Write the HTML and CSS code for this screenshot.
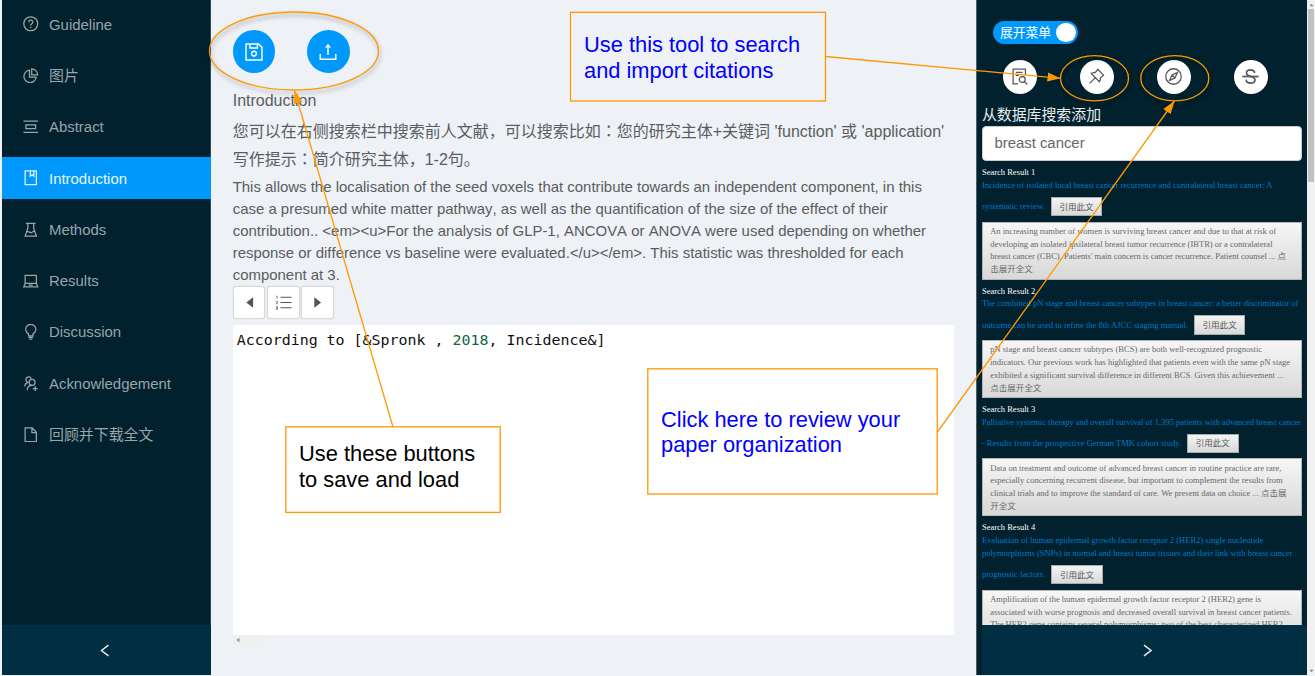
FILE: index.html
```html
<!DOCTYPE html>
<html lang="zh-CN">
<head>
<meta charset="utf-8">
<title>Introduction</title>
<link rel="stylesheet" href="styles.css">
</head>
<body>
<div class="app">
  <aside class="sider">
    <nav class="menu">
      <a class="item"><svg class="ico" viewBox="0 0 16 16"><circle cx="8" cy="8" r="7.2"/><path d="M5.9 6.4a2.1 2 0 1 1 3.1 1.7c-.7.4-1 .8-1 1.6M8 11v1.3"/></svg>Guideline</a>
      <a class="item han"><svg class="ico" viewBox="0 0 16 16"><path d="M6.7 2.3a6.4 6.4 0 1 0 7 7H6.7z"/><path d="M9 .9V7h6.1A6.3 6.3 0 0 0 9 .9z"/></svg><span>图片</span></a>
      <a class="item"><svg class="ico" viewBox="0 0 16 16"><path d="M.5 2.2h15M.5 13.8h15M3 6h10v4H3z"/></svg>Abstract</a>
      <a class="item active"><svg class="ico" viewBox="0 0 16 16"><path d="M2.2 1h11.6v14H2.2zM7.6 1v5.4l1.8-1.4 1.8 1.4V1"/></svg>Introduction</a>
      <a class="item"><svg class="ico" viewBox="0 0 16 16"><path d="M3 1.4h10M5 1.400v5L2.200 14.500h11.600L11 6.400v-5M3.600 10.300c2.200-1.200 3.300.9 5 .6 1.600-.3 1.800-1.600 3.400-1.500"/></svg>Methods</a>
      <a class="item"><svg class="ico" viewBox="0 0 16 16"><path d="M2.200 2.400h11.600v8.400H2.200zM2.200 10.800L.8 14.200h14.400l-1.400-3.400M6 12.600h4"/></svg>Results</a>
      <a class="item"><svg class="ico" viewBox="0 0 16 16"><path d="M5.700 12.200v-2a5.200 5.200 0 1 1 4.600 0v2zM5.600 13.800h4.800M6.400 15.500h3.200"/></svg>Discussion</a>
      <a class="item"><svg class="ico" viewBox="0 0 16 16"><circle cx="9.400" cy="6.600" r="3"/><path d="M8.600 2.900A2.900 2.900 0 1 0 5 6.600C3 7.400 1.900 8.800 1.600 10.800M4.200 14.600c.2-2.800 2.200-5 5.200-5M12.600 10.600v5M10.100 13.100h5"/></svg>Acknowledgement</a>
      <a class="item han"><svg class="ico" viewBox="0 0 16 16"><path d="M2.200 1h7.300l4.300 4.400V15H2.200zM9.200 1v4.700h4.600"/></svg><span>回顾并下载全文</span></a>
    </nav>
    <div class="trigger"><svg class="chev" viewBox="0 0 10 14"><path d="M9 1.200L1.500 7 9 12.800"/></svg></div>
  </aside>

  <main class="main">
    <div class="actions">
      <button class="round"><svg viewBox="0 0 18 18"><path d="M1 1h12.600L17 4.400V17H1zM5 1v4h7.400V1"/><circle cx="9" cy="10.600" r="2.400"/></svg></button>
      <button class="round"><svg viewBox="0 0 18 18"><path d="M1.200 11v5.200h15.600V11M9 12V3.500"/><path class="solid" d="M9 .8L12 4.600H6z"/></svg></button>
    </div>
    <div class="hints">
      <p>Introduction</p>
      <p>您可以在右侧搜索栏中搜索前人文献，可以搜索比如<span class="colon" lang="zh-TW">：</span>您的研究主体+关键词 'function' 或 'application'</p>
      <p>写作提示<span class="colon" lang="zh-TW">：</span>简介研究主体，1-2句。</p>
    </div>
    <p class="sample">This allows the localisation of the seed voxels that contribute towards an independent component, in this<br>case a presumed white matter pathway, as well as the quantification of the size of the effect of their<br>contribution.. &lt;em&gt;&lt;u&gt;For the analysis of GLP-1, ANCOVA or ANOVA were used depending on whether<br>response or difference vs baseline were evaluated.&lt;/u&gt;&lt;/em&gt;. This statistic was thresholded for each<br>component at 3.</p>
    <div class="pager">
      <button><svg viewBox="0 0 16 16"><path class="solid" d="M11.400 3v10L5 8z"/></svg></button>
      <button><svg viewBox="0 0 16 16"><path d="M5.200 3h10.300M5.200 8h10.300M5.200 13h10.300"/><path class="thin" d="M1 2h1v2.400M.8 7h1.600v1L1 9.200h1.600M.8 12h1.600v2.400H.8M1 13.200h1.400"/></svg></button>
      <button><svg viewBox="0 0 16 16"><path class="solid" d="M5 3v10l6.400-5z"/></svg></button>
    </div>
    <div class="editor">According to [&amp;Spronk , <span class="num">2018</span>, Incidence&amp;]</div>
    <div class="hscroll"><svg viewBox="0 0 4 6"><path class="solid" d="M3.500 .5v5L.5 3z"/></svg></div>
  </main>

  <aside class="panel">
    <div class="panel-body">
      <div class="switch"><span>展开菜单</span><i></i></div>
      <div class="tools">
        <button><svg viewBox="0 0 16 16"><path d="M6.600 15H2V1h11.600v5.800M4.600 4.200h6.400M4.600 7h3"/><circle cx="10.600" cy="10.800" r="2.800"/><path d="M12.600 12.800l2.800 2.800"/></svg></button>
        <button><svg viewBox="0 0 16 16"><path d="M9.300 1.400l5.300 5.300-3 2.700c.3 1.500 0 2.600-.8 3.600L3 5.200c1-.8 2.200-1.100 3.600-.8zM6.700 9.300L1.500 14.500"/></svg></button>
        <button><svg viewBox="0 0 16 16"><circle cx="8" cy="8" r="7.300"/><path d="M11.700 4.300L9.400 9.400l-5.100 2.300 2.300-5.100zM6.600 6.600l2.800 2.800"/></svg></button>
        <button><svg viewBox="0 0 16 16"><path class="bold" d="M12 4.600C11.600 2.500 10.200 1.700 8 1.700S4.200 2.900 4.200 4.700c0 4.100 8 2.200 8 6.400 0 2-1.700 3.200-4.200 3.200s-4-1.100-4.200-3.300"/><path class="bold" d="M.3 8h15.400"/></svg></button>
      </div>
      <div class="caption">从数据库搜索添加</div>
      <div class="search">breast cancer</div>

      <section class="result">
        <h4>Search Result 1</h4>
        <div class="link">Incidence of isolated local breast cancer recurrence and contralateral breast cancer: A</div>
        <div class="link row">systematic review.<button>引用此文</button></div>
        <div class="card">An increasing number of women is surviving breast cancer and due to that at risk of<br>developing an isolated ipsilateral breast tumor recurrence (IBTR) or a contralateral<br>breast cancer (CBC). Patients' main concern is cancer recurrence. Patient counsel ... 点<br>击展开全文</div>
      </section>
      <section class="result">
        <h4>Search Result 2</h4>
        <div class="link">The combined pN stage and breast cancer subtypes in breast cancer: a better discriminator of</div>
        <div class="link row">outcome can be used to refine the 8th AJCC staging manual.<button>引用此文</button></div>
        <div class="card">pN stage and breast cancer subtypes (BCS) are both well-recognized prognostic<br>indicators. Our previous work has highlighted that patients even with the same pN stage<br>exhibited a significant survival difference in different BCS. Given this achievement ...<br>点击展开全文</div>
      </section>
      <section class="result">
        <h4>Search Result 3</h4>
        <div class="link">Palliative systemic therapy and overall survival of 1,395 patients with advanced breast cancer</div>
        <div class="link row">- Results from the prospective German TMK cohort study.<button>引用此文</button></div>
        <div class="card">Data on treatment and outcome of advanced breast cancer in routine practice are rare,<br>especially concerning recurrent disease, but important to complement the results from<br>clinical trials and to improve the standard of care. We present data on choice ... 点击展<br>开全文</div>
      </section>
      <section class="result">
        <h4>Search Result 4</h4>
        <div class="link">Evaluation of human epidermal growth factor receptor 2 (HER2) single nucleotide<br>polymorphisms (SNPs) in normal and breast tumor tissues and their link with breast cancer</div>
        <div class="link row">prognostic factors.<button>引用此文</button></div>
        <div class="card">Amplification of the human epidermal growth factor receptor 2 (HER2) gene is<br>associated with worse prognosis and decreased overall survival in breast cancer patients.<br>The HER2 gene contains several polymorphisms; two of the best characterized HER2</div>
      </section>
    </div>
    <div class="trigger"><svg class="chev" viewBox="0 0 10 14"><path d="M1 1.200L8.500 7 1 12.800"/></svg></div>
  </aside>

  <div class="vscroll"><svg viewBox="0 0 6 4"><path class="solid" d="M.5 3.500h5L3 .5z"/></svg><i></i><svg viewBox="0 0 6 4"><path class="solid" d="M.5 .5h5L3 3.500z"/></svg></div>
</div>

<div class="callout load">Use these buttons<br>to save and load</div>
<div class="callout cite">Use this tool to search<br>and import citations</div>
<div class="callout review">Click here to review your<br>paper organization</div>
<svg class="marks" viewBox="0 0 1315 676">
  <defs>
    <marker id="tip" markerUnits="userSpaceOnUse" markerWidth="14" markerHeight="10" refX="13" refY="5" orient="auto"><path class="head" d="M0 .5L13 5 0 9.500z"/></marker>
  </defs>
  <g class="rings">
    <ellipse cx="294" cy="51" rx="84.500" ry="39"/>
    <ellipse cx="1094.500" cy="78.300" rx="34" ry="22.600"/>
    <ellipse cx="1174.800" cy="78.300" rx="34" ry="22.600"/>
  </g>
  <rect x="570.500" y="12.300" width="255" height="88.700"/>
  <rect x="285.800" y="426.800" width="214.400" height="85.600"/>
  <rect x="647.800" y="368.800" width="289.400" height="125.200"/>
  <path marker-end="url(#tip)" d="M393 427L294.500 90.500"/>
  <path marker-end="url(#tip)" d="M825.500 56.500L1060.500 78.300"/>
  <path marker-end="url(#tip)" d="M937.500 432L1174.500 101"/>
</svg>
</body>
</html>
```
FILE: styles.css
```css
* { box-sizing: border-box; }
body {
  margin: 0;
  width: 1315px;
  height: 676px;
  overflow: hidden;
  position: relative;
  background: #eef1f5;
  font-family: "Liberation Sans", "Noto Sans CJK SC", sans-serif;
  color: #5a5d60;
}
p, h4 { margin: 0; font-weight: normal; }
button { font-family: inherit; padding: 0; border: 0; }
svg { fill: none; stroke: currentColor; stroke-width: 1.3; flex: none; }
svg .solid { fill: currentColor; stroke: none; }
.app { display: flex; height: 675px; padding-left: 2px; }

/* left navigation */
.sider { width: 209.400px; background: #00212d; display: flex; flex-direction: column; box-shadow: inset -1px 0 #24505f; }
.menu { flex: 1; display: flex; flex-direction: column; gap: 8.500px; padding-top: 2.800px; }
.item { height: 42.800px; display: flex; align-items: center; padding-left: 21px; gap: 10.500px; font-size: 14.930px; color: #9aa5aa; white-space: nowrap; }
.item.han span { padding-bottom: 2.500px; }
.item.active { background: #0099fb; color: #e6f5ff; }
.ico { width: 15.500px; height: 15.500px; stroke-width: 1.300; }
.trigger { height: 50px; background: #002f43; color: #e3e9ec; display: flex; align-items: center; justify-content: center; }
.sider .trigger { padding-right: 4px; }
.chev { width: 9.500px; height: 13px; stroke-width: 1.600; }

/* writing area */
.main { width: 765px; padding: 30.300px 22px 0 21.300px; }
.actions { display: flex; gap: 32px; }
.round { width: 42.500px; height: 43px; border-radius: 50%; background: #0099fb; color: #fff; display: flex; align-items: center; justify-content: center; }
.round svg { width: 18px; height: 18px; stroke-width: 1.400; }
.hints { font-size: 16px; line-height: 28.500px; padding-top: 14.200px; white-space: nowrap; }
.hints p { height: 28.500px; }
.colon { font-family: "Noto Sans CJK TC", sans-serif; }
.sample { font-size: 14.950px; line-height: 22px; padding-top: 3px; white-space: nowrap; font-kerning: none; }
.pager { display: flex; gap: 1.500px; }
.pager button { width: 32.700px; height: 33px; background: #fff; border: 1px solid #d8d8da; border-radius: 3px; box-shadow: 0 0 1px #ccc; color: #555; display: flex; align-items: center; justify-content: center; }
.pager svg { width: 17px; height: 17px; stroke-width: 1; }
.pager .thin { stroke-width: .7; }
.editor { height: 309.500px; margin-top: 6.500px; background: #fff; color: #111; font: 14.950px/30px "DejaVu Sans Mono", monospace; padding-left: 4px; white-space: pre; }
.num { color: #116644; }
.hscroll { width: 30px; height: 11px; background: #f0f0f0; color: #999; display: flex; align-items: center; padding-left: 3px; }
.hscroll svg { width: 4px; height: 6px; }

/* citation panel */
.panel { width: 331px; background: #00212d; display: flex; flex-direction: column; box-shadow: inset 1px 0 #4c6069; }
.panel .trigger { margin-left: 5.500px; padding-left: 6px; }
.panel-body { height: 625px; overflow: hidden; padding: 20.500px 5.500px 0 5.500px; }
.switch { width: 85px; height: 23.500px; margin-left: 11px; border-radius: 12px; background: #0099fb; color: #fff; font-size: 12.800px; display: flex; align-items: center; justify-content: space-between; padding: 0 2px 0 7px; }
.switch span { padding-bottom: 2px; }
.switch i { width: 19.500px; height: 19.500px; border-radius: 50%; background: #fff; }
.tools { display: flex; justify-content: space-between; padding: 15.700px 34px 0 21px; }
.tools button { width: 34px; height: 34px; border-radius: 50%; background: #fff; color: #58595b; display: flex; align-items: center; justify-content: center; }
.tools svg { width: 17px; height: 17px; stroke-width: 1.200; }
.tools .bold { stroke-width: 1.600; }
.caption { color: #e8ecee; font-size: 14.900px; line-height: 22px; margin-top: 10.300px; height: 22px; }
.search { height: 35px; border: 1px solid #ccc; border-radius: 4px; background: #fff; color: #666; font-size: 14.900px; line-height: 33px; padding-left: 11.500px; }
.result { font: 8.530px/12.800px "Liberation Serif", "Noto Sans CJK SC", serif; margin-bottom: 5px; white-space: nowrap; }
.search + .result { margin-top: 5.200px; }
.result h4 { font-size: 8.530px; color: #fff; }
.link { color: #0079cb; }
.row { height: 29.800px; display: flex; align-items: center; gap: 6px; }
.row button { width: 51.500px; height: 19.500px; border: 1px solid #aaa; background: linear-gradient(#f4f4f4, #d9d9d9); color: #555; font-size: 8.530px; line-height: 16px; }
.card { height: 58px; border: 1px solid #b5b5b5; background: linear-gradient(#f6f6f6, #d8d8d8); color: #686868; padding: 2.200px 0 0 7.300px; }
.vscroll { width: 7.600px; background: #f1f1f1; color: #888; display: flex; flex-direction: column; align-items: center; padding: 3px 0 2px; }
.vscroll i { width: 6px; height: 173px; margin-top: 2px; margin-bottom: auto; background: #c1c1c1; }
.vscroll svg { width: 5px; height: 4px; }

/* annotations over the interface */
.callout { position: absolute; color: #00f; font-size: 21.850px; line-height: 25.800px; white-space: nowrap; }
.cite { left: 570px; top: 12px; width: 256px; height: 89px; padding: 20.400px 0 0 14px; }
.load { left: 286px; top: 427px; width: 214px; height: 85px; padding: 14.400px 0 0 13px; color: #000; background: #fff; }
.review { left: 648px; top: 369px; width: 289px; height: 125px; padding: 37.600px 0 0 13px; background: #fff; }
.marks { position: absolute; left: 0; top: 0; width: 1315px; height: 676px; stroke: #ff9900; stroke-width: 1.300; pointer-events: none; }
.rings { filter: drop-shadow(1px 3px 2px rgba(0, 0, 0, .35)); }
.head { fill: #ff9900; stroke: none; }
```
